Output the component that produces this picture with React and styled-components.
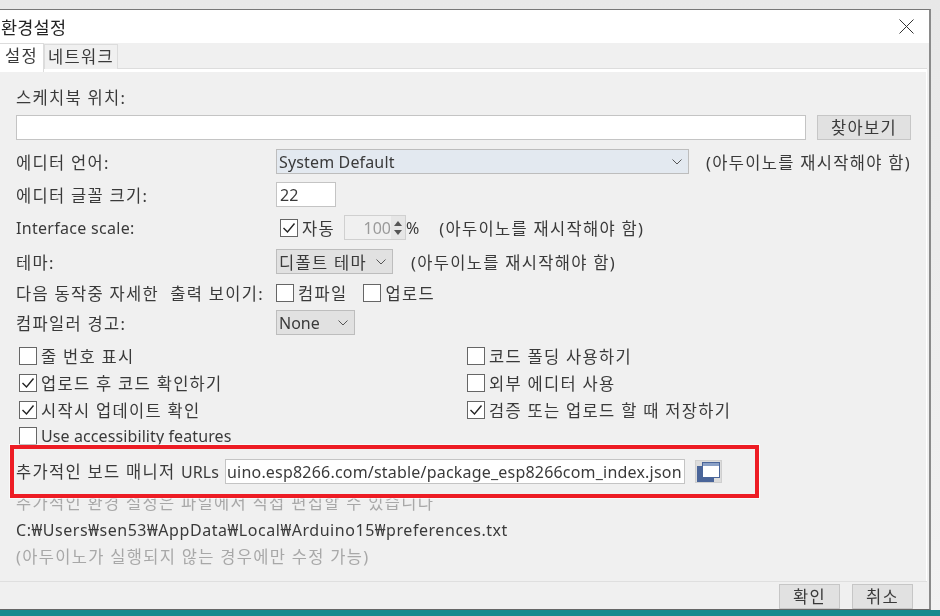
import React from 'react'
import styled, { createGlobalStyle } from 'styled-components'

const FONT = `"Noto Sans", "Noto Sans CJK KR", sans-serif`

const Global = createGlobalStyle`
  html, body { margin: 0; padding: 0; background: #dcdcdc; }
  body { width: 940px; height: 616px; overflow: hidden; font-family: ${FONT}; color: #3a3a3a; }
  * { box-sizing: border-box; }
`

const Desktop = styled.div`
  position: relative;
  width: 940px;
  height: 616px;
  padding: 9px 9px 0 0;
  background: linear-gradient(#e8e8e8, #f2f2f2);
  overflow: hidden;
  filter: blur(0.3px);
`

const Taskbar = styled.div`
  position: absolute;
  left: 0;
  right: 0;
  bottom: 0;
  height: 6px;
  background: #178a8e;
`

const Dialog = styled.div`
  width: 931px;
  height: 601px;
  background: #f0f0f0;
  border-top: 1px solid #777;
  border-right: 2px solid #8a8a8a;
  border-bottom: 1px solid #666;
  display: flex;
  flex-direction: column;
  font-size: 16.5px;
  letter-spacing: 1.3px;
`

const TitleBar = styled.div`
  height: 33px;
  flex: none;
  background: #fff;
  display: flex;
  align-items: center;
  justify-content: space-between;
  padding: 0 15px 0 1px;
  font-size: 17.5px;
  letter-spacing: 0.2px;
  color: #222;
`

const TabStrip = styled.div`
  height: 29px;
  flex: none;
  display: flex;
  align-items: flex-end;
  border-bottom: 3px solid #fff;
  margin-right: 2px;
  box-shadow: inset 0 -1px 0 #ddd;
`

const Tab = styled.div`
  height: ${p => (p.$active ? 29 : 25)}px;
  width: ${p => (p.$active ? 44 : 74)}px;
  margin-bottom: ${p => (p.$active ? -3 : 0)}px;
  background: ${p => (p.$active ? '#fff' : '#f0f0f0')};
  border: 1px solid #dcdcdc;
  border-bottom: 0;
  border-left: ${p => (p.$active ? 0 : '1px solid #dcdcdc')};
  line-height: 24px;
  text-align: center;
  white-space: nowrap;
`

const Panel = styled.div`
  flex: 1;
  padding: 0 15px 0 16px;
  border-right: 1px solid #fff;
  margin-right: 2px;
  display: flex;
  flex-direction: column;
`

const Row = styled.div`
  display: flex;
  align-items: center;
  height: ${p => p.$h}px;
  margin-top: ${p => p.$mt || 0}px;
  white-space: nowrap;
`

const Label = styled.div`
  width: 260px;
  flex: none;
`

const Latin = styled.span`
  font-size: 16px;
  letter-spacing: ${p => p.$ls || 0}px;
`

const Hint = styled.span`
  margin-left: ${p => p.$ml}px;
`

const TextBox = styled.div`
  width: ${p => p.$w}px;
  height: 25px;
  flex: ${p => (p.$w ? 'none' : 1)};
  background: #fff;
  border: 1px solid #c4c4c4;
  padding: 0 1px 0 ${p => p.$pl || 1}px;
  line-height: 23px;
  overflow: hidden;
  white-space: nowrap;
`

const Button = styled.div`
  width: ${p => p.$w}px;
  height: 25px;
  flex: none;
  margin-left: ${p => p.$ml || 0}px;
  background: #e1e1e1;
  border: 1px solid #c6c6c6;
  text-align: center;
  line-height: 23px;
`

const Select = styled.div`
  width: ${p => p.$w}px;
  height: 25px;
  flex: none;
  display: flex;
  align-items: center;
  justify-content: space-between;
  padding: 0 6px 0 2px;
  background: ${p => (p.$focus ? '#e3e9f0' : '#e1e1e1')};
  border: 1px solid #bdbdbd;
`

const Chevron = () => (
  <svg width="10" height="6" viewBox="0 0 10 6" fill="none" stroke="#555" strokeWidth="1">
    <path d="M0.5 0.5 L5 5 L9.5 0.5" />
  </svg>
)

const CheckWrap = styled.label`
  display: inline-flex;
  align-items: center;
  margin-left: ${p => p.$ml || 0}px;
  gap: 4px;
`

const CheckBox = styled.span`
  width: 18px;
  height: 18px;
  flex: none;
  background: #fff;
  border: 1px solid #666;
  display: flex;
  align-items: center;
  justify-content: center;
`

const Check = ({ on, ml, children }) => (
  <CheckWrap $ml={ml}>
    <CheckBox>
      {on && (
        <svg width="14" height="12" viewBox="0 0 14 12" fill="none" stroke="#222" strokeWidth="1.4">
          <path d="M1.5 6 L5.5 10 L12.5 1.5" />
        </svg>
      )}
    </CheckBox>
    {children}
  </CheckWrap>
)

const Spinner = styled.div`
  width: 62px;
  height: 25px;
  margin-left: 9px;
  flex: none;
  display: flex;
  background: #f0f0f0;
  border: 1px solid #d0d0d0;
  color: #9a9a9a;
  line-height: 23px;
`

const SpinValue = styled.span`
  flex: 1;
  text-align: right;
`

const SpinArrows = styled.span`
  width: 14px;
  flex: none;
  background: #e6e6e6;
  display: flex;
  flex-direction: column;
  align-items: center;
  justify-content: center;
  gap: 4px;
`

const SpinUp = styled.i`
  width: 0;
  height: 0;
  border: 4px solid transparent;
  border-top: 0;
  border-bottom: 5px solid #555;
`

const SpinDown = styled(SpinUp)`
  border-bottom: 0;
  border-top: 5px solid #555;
`

const CheckGrid = styled.div`
  display: grid;
  grid-template-columns: 448px 1fr;
  grid-auto-rows: 26.67px;
  margin-top: 8px;
  padding-left: 3px;
  align-items: center;
  white-space: nowrap;
`

const UrlLabel = styled.div`
  width: 209px;
  flex: none;
`

const Muted = styled.div`
  height: 27px;
  margin-top: ${p => p.$mt || 0}px;
  line-height: 27px;
  color: ${p => (p.$dim ? '#a8a8a8' : '#3a3a3a')};
  white-space: nowrap;
`

const Footer = styled.div`
  height: 28px;
  flex: none;
  margin-right: 2px;
  border-top: 1px solid #dfdfdf;
  display: flex;
  justify-content: flex-end;
  align-items: flex-start;
  gap: 12px;
  padding: 2px 14px 0 0;
`

const Highlight = styled.div`
  position: absolute;
  left: 10px;
  top: 445px;
  width: 749px;
  height: 53px;
  border: 4px solid #ed1c24;
  outline: 1px solid rgba(255, 255, 255, 0.6);
  pointer-events: none;
`

const IconButton = styled.div`
  width: 27px;
  height: 23px;
  flex: none;
  margin-left: 10px;
  background: #dcdcdc;
  border: 1px solid #cfcfcf;
`

const App = () => (
  <Desktop>
    <Global />
    <Dialog>
      <TitleBar>
        환경설정
        <svg width="15" height="15" viewBox="0 0 15 15" stroke="#333" strokeWidth="1" fill="none">
          <path d="M0.5 0.5 L14.5 14.5 M14.5 0.5 L0.5 14.5" />
        </svg>
      </TitleBar>
      <TabStrip>
        <Tab $active>설정</Tab>
        <Tab>네트워크</Tab>
      </TabStrip>
      <Panel>
        <Row $h={25} $mt={12}>스케치북 위치:</Row>
        <Row $h={25} $mt={6}>
          <TextBox />
          <Button $w={94} $ml={11}>찾아보기</Button>
        </Row>
        <Row $h={25} $mt={9}>
          <Label>에디터 언어:</Label>
          <Select $w={413} $focus><Latin $ls={0.15}>System Default</Latin><Chevron /></Select>
          <Hint $ml={17}>(아두이노를 재시작해야 함)</Hint>
        </Row>
        <Row $h={25} $mt={8}>
          <Label>에디터 글꼴 크기:</Label>
          <TextBox $w={60} $pl={3}><Latin>22</Latin></TextBox>
        </Row>
        <Row $h={25} $mt={8}>
          <Label><Latin $ls={0.3}>Interface scale:</Latin></Label>
          <Check on ml={4}>자동</Check>
          <Spinner>
            <SpinValue><Latin>100</Latin></SpinValue>
            <SpinArrows><SpinUp /><SpinDown /></SpinArrows>
          </Spinner>
          <Latin>%</Latin>
          <Hint $ml={20}>(아두이노를 재시작해야 함)</Hint>
        </Row>
        <Row $h={25} $mt={9}>
          <Label>테마:</Label>
          <Select $w={117}>디폴트 테마<Chevron /></Select>
          <Hint $ml={18}>(아두이노를 재시작해야 함)</Hint>
        </Row>
        <Row $h={25} $mt={6}>
          <Label>다음 동작중 자세한&nbsp; 출력 보이기:</Label>
          <Check>컴파일</Check>
          <Check ml={16}>업로드</Check>
        </Row>
        <Row $h={25} $mt={5}>
          <Label>컴파일러 경고:</Label>
          <Select $w={79}><Latin>None</Latin><Chevron /></Select>
        </Row>
        <CheckGrid>
          <Check>줄 번호 표시</Check>
          <Check>코드 폴딩 사용하기</Check>
          <Check on>업로드 후 코드 확인하기</Check>
          <Check>외부 에디터 사용</Check>
          <Check on>시작시 업데이트 확인</Check>
          <Check on>검증 또는 업로드 할 때 저장하기</Check>
          <Check><Latin $ls={0.1}>Use accessibility features</Latin></Check>
        </CheckGrid>
        <Row $h={25} $mt={9}>
          <UrlLabel>추가적인 보드 매니저 <Latin>URLs</Latin></UrlLabel>
          <TextBox $w={460}><Latin $ls={0.2}>uino.esp8266.com/stable/package_esp8266com_index.json</Latin></TextBox>
          <IconButton>
            <svg width="25" height="21" viewBox="0 0 25 21">
              <rect x="1" y="5" width="17" height="16" fill="#4a6599" />
              <rect x="6.5" y="1.5" width="17" height="15" fill="#fff" stroke="#4a6599" />
              <rect x="7" y="2" width="16" height="3" fill="#8aa0c6" />
            </svg>
          </IconButton>
        </Row>
        <Muted $dim $mt={5}>추가적인 환경 설정은 파일에서 직접 편집할 수 있습니다</Muted>
        <Muted><Latin $ls={0.55}>C:₩Users₩sen53₩AppData₩Local₩Arduino15₩preferences.txt</Latin></Muted>
        <Muted $dim>(아두이노가 실행되지 않는 경우에만 수정 가능)</Muted>
      </Panel>
      <Footer>
        <Button $w={61}>확인</Button>
        <Button $w={61}>취소</Button>
      </Footer>
    </Dialog>
    <Highlight />
    <Taskbar />
  </Desktop>
)

export default App
